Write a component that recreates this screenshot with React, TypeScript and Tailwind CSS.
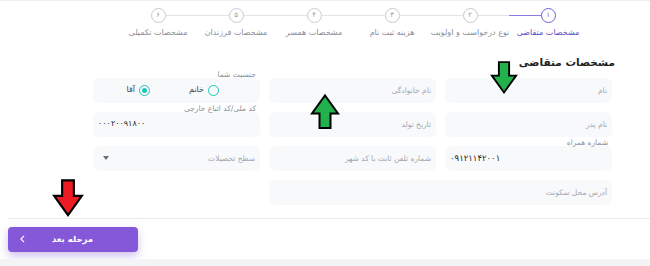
import React from 'react';

const FONT = { fontFamily: '"DejaVu Sans", "Noto Sans", sans-serif' };

const STEPS = [
  { n: '۱', label: 'مشخصات متقاضی' },
  { n: '۲', label: 'نوع درخواست و اولویت' },
  { n: '۳', label: 'هزینه ثبت نام' },
  { n: '۴', label: 'مشخصات همسر' },
  { n: '۵', label: 'مشخصات فرزندان' },
  { n: '۶', label: 'مشخصات تکمیلی' },
];

const Stepper: React.FC = () => (
  <div className="flex pr-[63px] pt-[7px]">
    {STEPS.map((s, i) => {
      const active = i === 0;
      return (
        <div key={i} className="w-[78px] flex flex-col items-center">
          <div className="flex items-center w-full h-[15px]">
            <div className={`flex-1 h-px ${i === 0 ? 'bg-transparent' : 'bg-[#e3e3e8]'}`} />
            <div
              className={`w-[15px] h-[15px] rounded-full border flex items-center justify-center text-[7px] leading-none ${active ? 'border-[#6f5fd6] text-[#6f5fd6]' : 'border-[#c9c9cf] text-[#9a9aa2]'}`}
            >
              {s.n}
            </div>
            <div className={`flex-1 h-px ${i === STEPS.length - 1 ? 'bg-transparent' : active ? 'bg-[#8a7ce0]' : 'bg-[#e3e3e8]'}`} />
          </div>
          <div className={`mt-[4px] text-[8px] whitespace-nowrap ${active ? 'text-[#5b4cc4]' : 'text-[#8d8d95]'}`}>{s.label}</div>
        </div>
      );
    })}
  </div>
);

const Field: React.FC<{ placeholder?: string; label?: string; className?: string; children?: React.ReactNode }> = ({ placeholder, label, className = '', children }) => (
  <div className={`relative h-[25px] rounded-[6px] bg-[#f8f9fb] flex items-center px-[5px] ${className}`}>
    {label && <span className="absolute -top-[8px] right-[4px] text-[7.5px] leading-[10px] text-[#8a8f98]">{label}</span>}
    {placeholder && <span className="text-[7.5px] text-[#a3a6ad]">{placeholder}</span>}
    {children}
  </div>
);

const Radio: React.FC<{ checked?: boolean; label: string }> = ({ checked, label }) => (
  <div className="flex items-center gap-[4px]">
    <span className="w-[11px] h-[11px] rounded-full border-[1.5px] border-[#1ec6b8] flex items-center justify-center">
      {checked && <span className="w-[5px] h-[5px] rounded-full bg-[#1ec6b8]" />}
    </span>
    <span className="text-[8px] text-[#3f3f46]">{label}</span>
  </div>
);

const Arrow: React.FC<{ color: string; up?: boolean; className: string }> = ({ color, up, className }) => (
  <svg viewBox="0 0 30 36" className={`absolute ${className}`} style={up ? { transform: 'rotate(180deg)' } : undefined}>
    <path d="M9.5 1.5 H20.5 V16 H28 L15 34 L2 16 H9.5 Z" fill={color} stroke="#000" strokeWidth="2" strokeLinejoin="miter" />
  </svg>
);

export default function App() {
  return (
    <div dir="rtl" className="relative w-[650px] h-[266px] bg-white overflow-hidden border-t border-[#efeff2]" style={FONT}>
      <Stepper />

      <div className="pr-[35px] mt-[16px] text-[10.5px] font-bold text-[#1f1f24]">مشخصات متقاضی</div>

      <div className="pr-[38px] pl-[93px] mt-[7px] grid grid-cols-3 gap-x-[9px] gap-y-[9px]">
        <Field placeholder="نام" />
        <Field placeholder="نام خانوادگی" />
        <Field label="جنسیت شما">
          <div className="flex items-center gap-[39px] pr-[36px]">
            <Radio label="خانم" />
            <Radio checked label="آقا" />
          </div>
        </Field>

        <Field placeholder="نام پدر" />
        <Field placeholder="تاریخ تولد" />
        <Field label="کد ملی/کد اتباع خارجی">
          <span dir="ltr" className="mr-auto text-[8px] text-[#1f1f24]">۰۰۰۲۰۰۹۱۸۰۰</span>
        </Field>

        <Field label="شماره همراه">
          <span dir="ltr" className="mr-auto text-[8.5px] text-[#1f1f24]">۰۹۱۲۱۱۴۲۰۰۱</span>
        </Field>
        <Field placeholder="شماره تلفن ثابت با کد شهر" />
        <Field placeholder="سطح تحصیلات" className="justify-between pl-[10px]">
          <svg viewBox="0 0 6 4" className="w-[6px] h-[4px]">
            <path d="M0 0 H6 L3 4 Z" fill="#6b6b73" />
          </svg>
        </Field>

        <Field placeholder="آدرس محل سکونت" className="col-span-2" />
      </div>

      <div className="mt-[13px] ml-[8px] h-px bg-[#ececf0]" />

      <div dir="ltr" className="pl-[8px] mt-[8px]">
        <button className="w-[130px] h-[25px] rounded-[4px] bg-[#8558da] shadow-[0_4px_8px_rgba(120,80,210,0.35)] flex items-center px-[12px] text-white">
          <svg viewBox="0 0 8 12" className="w-[5px] h-[8px]">
            <path d="M6.5 1 L1.5 6 L6.5 11" fill="none" stroke="#fff" strokeWidth="1.8" />
          </svg>
          <span className="flex-1 text-center text-[8.5px] font-bold pr-[6px]">مرحله بعد</span>
        </button>
      </div>

      <div className="absolute left-0 right-0 bottom-0 h-[7px] bg-[#f4f4f6]" />

      <Arrow color="#22b14c" className="left-[490px] top-[59px] w-[28px] h-[35px]" />
      <Arrow color="#22b14c" up className="left-[310px] top-[92px] w-[30px] h-[37px]" />
      <Arrow color="#ed1c24" className="left-[52px] top-[175px] w-[32px] h-[44px]" />
    </div>
  );
}
